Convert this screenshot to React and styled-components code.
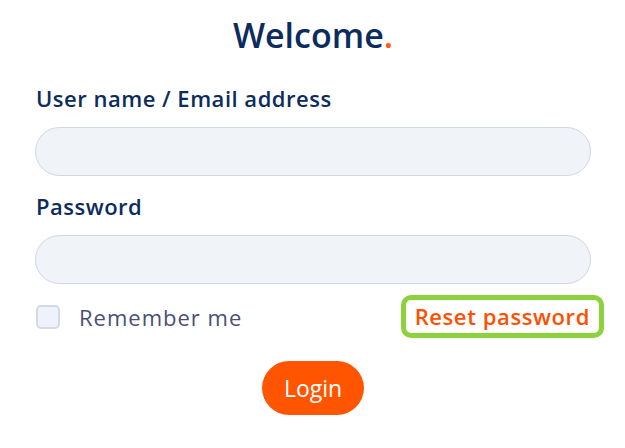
import React from 'react';
import styled, { createGlobalStyle } from 'styled-components';

const GlobalStyle = createGlobalStyle`
  body {
    margin: 0;
    background: #fff;
    font-family: "Open Sans", "Noto Sans", sans-serif;
  }
`;

const Form = styled.form`
  width: 556px;
  padding: 12px 0 0 35px;
  display: flex;
  flex-direction: column;
`;

const Title = styled.h1`
  margin: 0 0 26px;
  text-align: center;
  font-family: "Open Sans", sans-serif;
  font-weight: 600;
  font-size: 34px;
  line-height: 46px;
  color: #0c2c5e;

  span {
    color: #ff5a1a;
  }
`;

const Label = styled.label`
  padding-left: 1px;
  font-size: 22px;
  font-weight: 600;
  letter-spacing: 0.5px;
  color: #0c2c5e;
  line-height: 28px;
  margin-bottom: 15px;
`;

const Input = styled.input`
  box-sizing: border-box;
  width: 100%;
  height: 49px;
  border: 1.5px solid #cfd7e0;
  border-radius: 25px;
  background: #f0f4f8;
  padding: 0 20px;
  font-size: 18px;
  outline: none;
  margin-bottom: ${p => p.$gap || 16}px;
`;

const Row = styled.div`
  display: flex;
  align-items: center;
  justify-content: space-between;
  padding-left: 1px;
`;

const Remember = styled.label`
  display: flex;
  align-items: center;
  gap: 19px;
  font-size: 22px;
  letter-spacing: 1px;
  color: #4a4f78;
`;

const Box = styled.span`
  box-sizing: border-box;
  display: inline-block;
  width: 24px;
  height: 24px;
  border: 2px solid #d3dae3;
  border-radius: 5px;
  background: #eef3fb;
`;

const Highlight = styled.div`
  border: 5px solid #8dd13c;
  border-radius: 10px;
  padding: 1px 9px 2px;
  margin-right: -13px;
`;

const ResetLink = styled.a`
  font-size: 22px;
  font-weight: 600;
  letter-spacing: 0.6px;
  color: #ff5000;
  text-decoration: none;
`;

const LoginButton = styled.button`
  align-self: center;
  margin-top: 23px;
  width: 102px;
  height: 54px;
  border: none;
  border-radius: 27px;
  background: #ff5500;
  color: #fff;
  font-family: "Open Sans", sans-serif;
  font-size: 23px;
`;

export default function App() {
  return (
    <>
      <GlobalStyle />
      <Form onSubmit={e => e.preventDefault()}>
        <Title>Welcome<span>.</span></Title>
        <Label>User name / Email address</Label>
        <Input />
        <Label>Password</Label>
        <Input type="password" $gap={11} />
        <Row>
          <Remember>
            <Box />
            Remember me
          </Remember>
          <Highlight>
            <ResetLink href="#">Reset password</ResetLink>
          </Highlight>
        </Row>
        <LoginButton type="submit">Login</LoginButton>
      </Form>
    </>
  );
}
